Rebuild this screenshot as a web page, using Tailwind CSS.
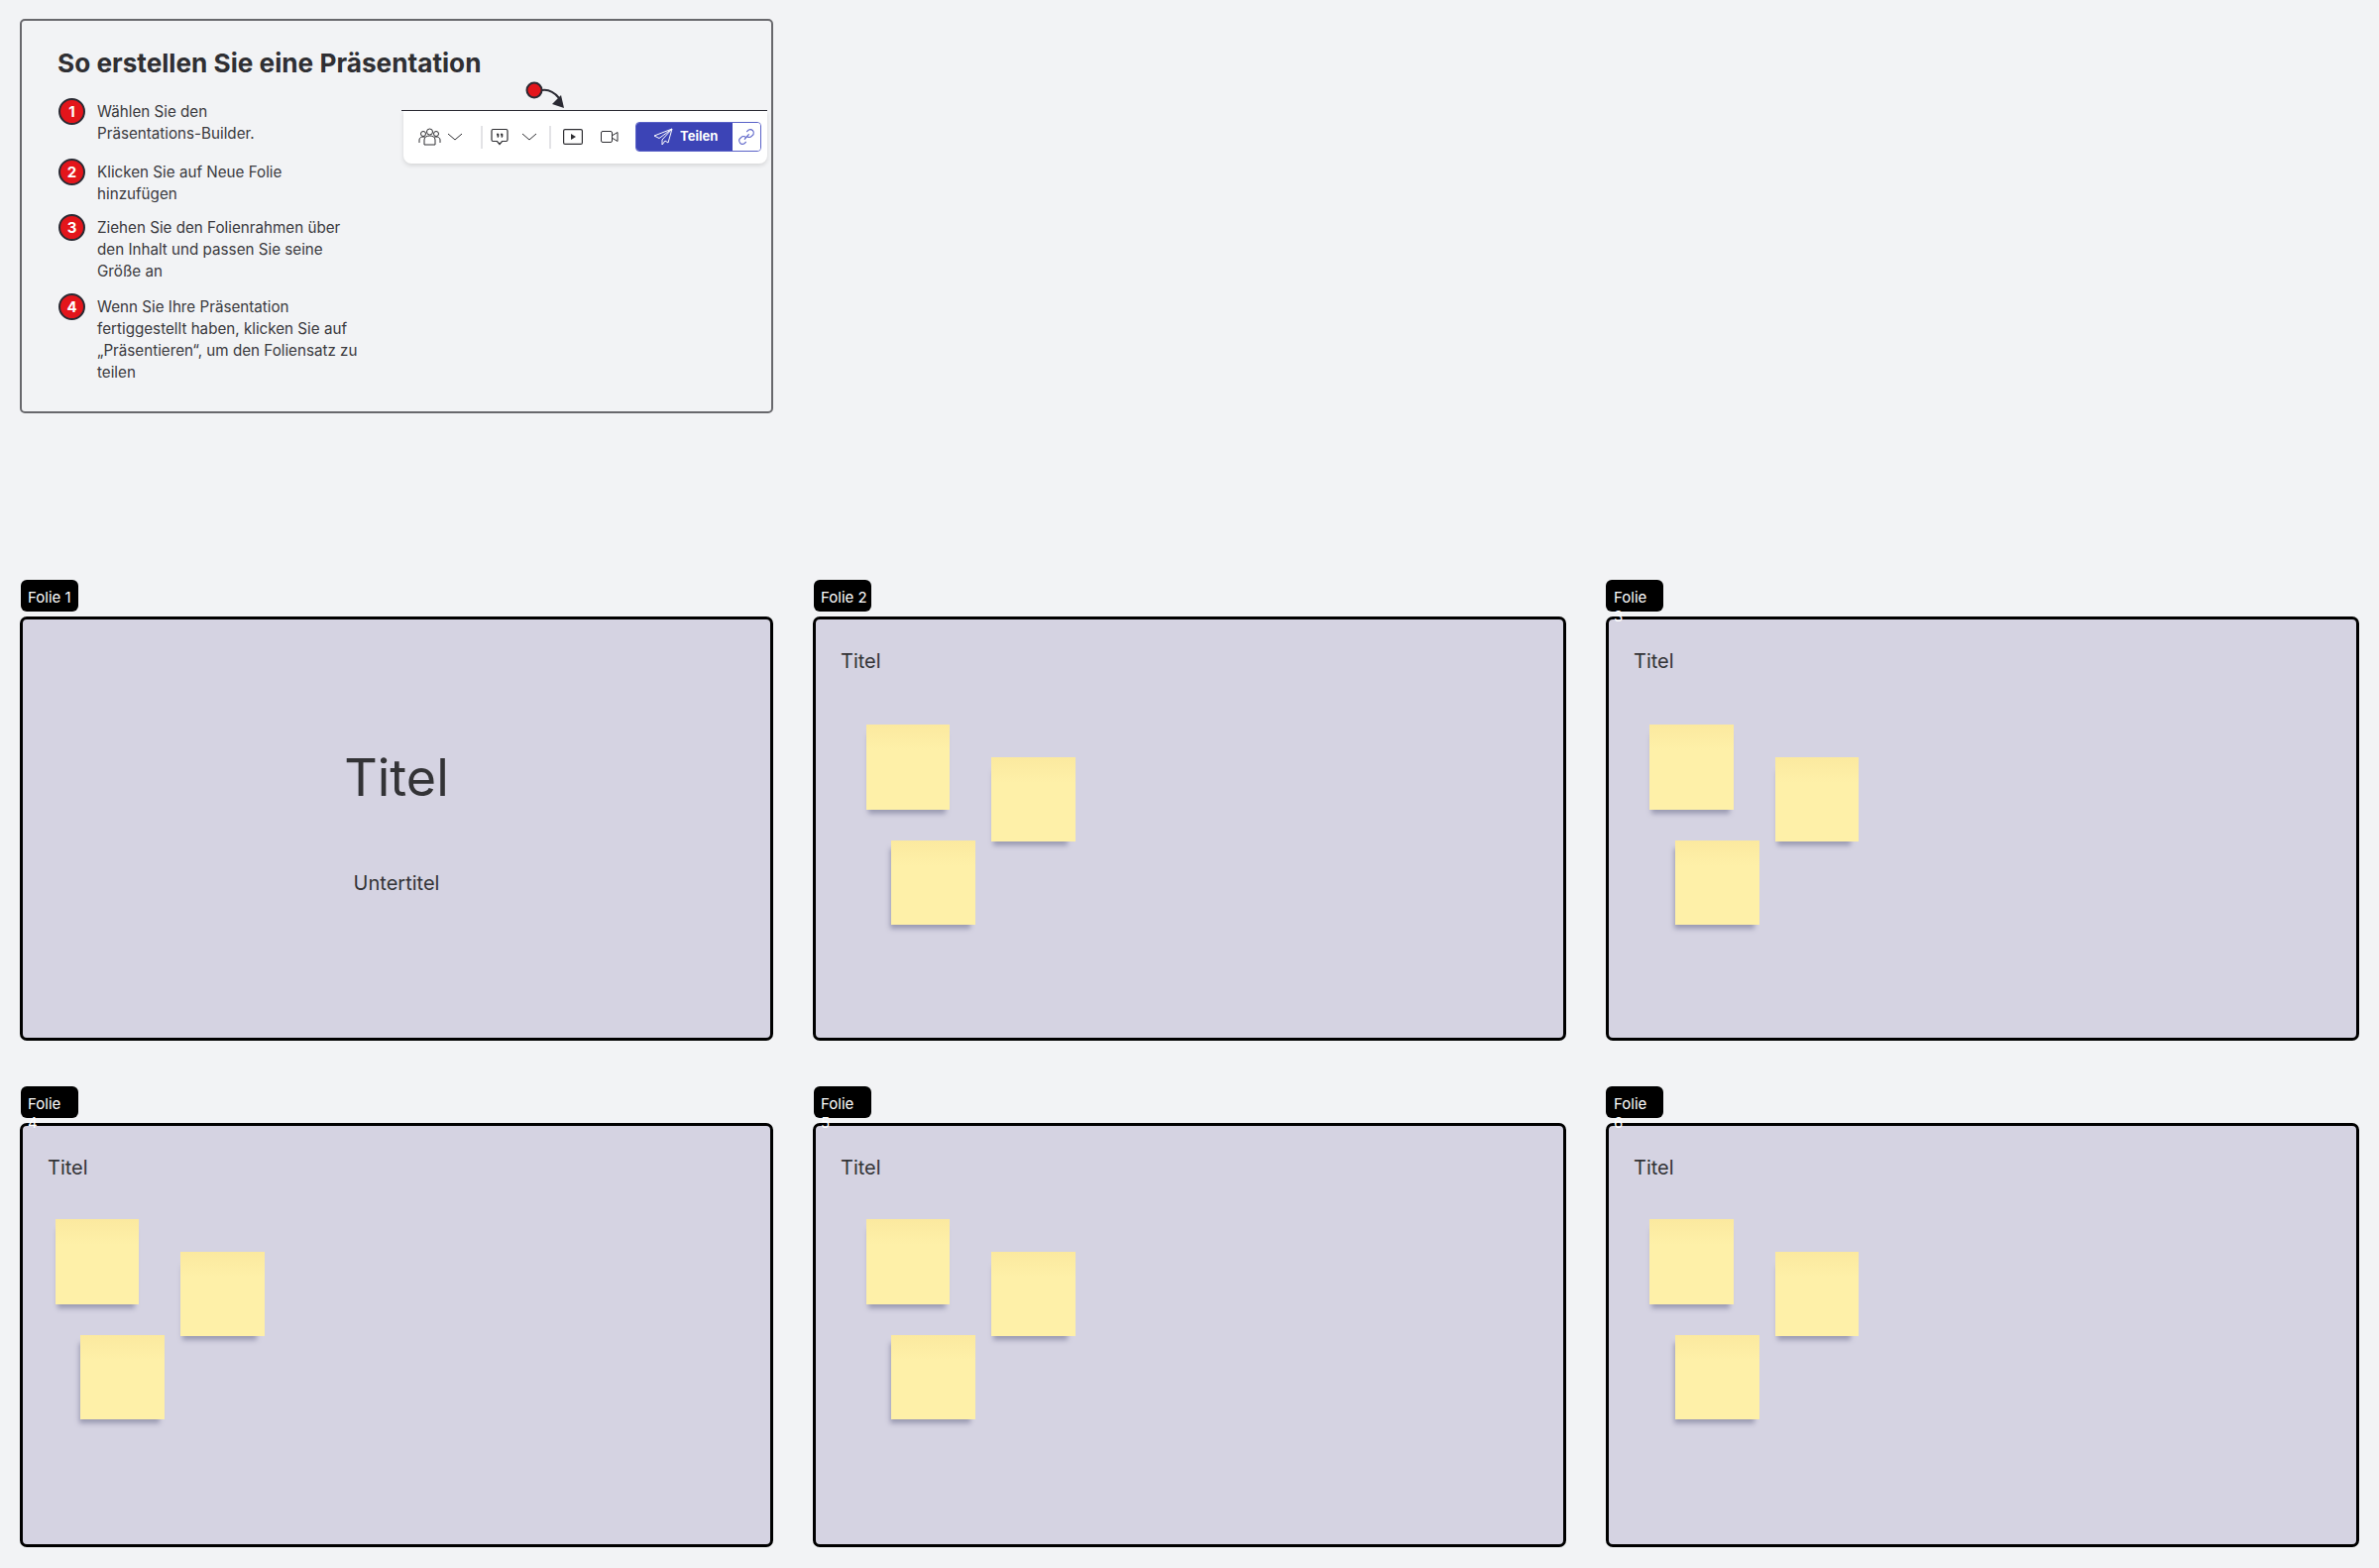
<!DOCTYPE html>
<html lang="de">
<head>
  <meta charset="UTF-8">
  <title>Präsentation</title>
  <script src="https://cdn.jsdelivr.net/npm/@tailwindcss/browser@4"></script>
</head>
<body class="bg-[#f2f3f5] font-[Inter,sans-serif] text-[#2f2f33] w-[2400px] h-[1582px] overflow-hidden">

  <!-- Anleitung -->
  <section class="relative ml-[20px] mt-[19px] w-[760px] h-[398px] border-2 border-[#68686c] rounded-[5px] pl-[37px] pt-[26px]">
    <h1 class="-ml-px text-[26.2px] leading-[34px] font-bold">So erstellen Sie eine Präsentation</h1>
    <ol class="mt-[18px] w-[340px] text-[15.2px] leading-[22px] text-[#3a3a3e]">
      <li class="flex gap-[12px] h-[61px]">
        <span class="shrink-0 flex items-center justify-center w-[27px] h-[27px] pt-px rounded-full bg-[#e3151b] border-2 border-[#2a2a33] text-white text-[15px] font-bold">1</span>
        <p class="pt-[3px] w-[260px]">Wählen Sie den<br>Präsentations-Builder.</p>
      </li>
      <li class="flex gap-[12px] h-[56px]">
        <span class="shrink-0 flex items-center justify-center w-[27px] h-[27px] pt-px rounded-full bg-[#e3151b] border-2 border-[#2a2a33] text-white text-[15px] font-bold">2</span>
        <p class="pt-[3px] w-[260px]">Klicken Sie auf Neue Folie<br>hinzufügen</p>
      </li>
      <li class="flex gap-[12px] h-[80px]">
        <span class="shrink-0 flex items-center justify-center w-[27px] h-[27px] pt-px rounded-full bg-[#e3151b] border-2 border-[#2a2a33] text-white text-[15px] font-bold">3</span>
        <p class="pt-[3px] w-[290px]">Ziehen Sie den Folienrahmen über<br>den Inhalt und passen Sie seine<br>Größe an</p>
      </li>
      <li class="flex gap-[12px]">
        <span class="shrink-0 flex items-center justify-center w-[27px] h-[27px] pt-px rounded-full bg-[#e3151b] border-2 border-[#2a2a33] text-white text-[15px] font-bold">4</span>
        <p class="pt-[3px] w-[300px]">Wenn Sie Ihre Präsentation<br>fertiggestellt haben, klicken Sie auf<br>„Präsentieren“, um den Foliensatz zu<br>teilen</p>
      </li>
    </ol>

    <!-- Pfeil zur Symbolleiste -->
    <svg class="absolute left-[508px] top-[60px]" width="50" height="32" viewBox="0 0 50 32" fill="none">
      <circle cx="9" cy="10" r="7.5" fill="#e3151b" stroke="#2a2a33" stroke-width="2"/>
      <path d="M17 10c7-1 12 2 17 8" stroke="#2a2a33" stroke-width="2"/>
      <path d="M39 28l-12-4 9-9z" fill="#2a2a33"/>
    </svg>

    <!-- Symbolleiste -->
    <div class="absolute left-[383px] top-[90px] w-[369px] h-[54px] border-t-[1.5px] border-[#2a2a33]">
      <div class="ml-[2px] h-[53px] bg-white rounded-b-[8px] shadow-[0_2px_4px_rgba(0,0,0,0.12)] flex items-center pl-[15px] pb-[1px] text-[#2f2f33]">
        <svg width="23" height="18" viewBox="0 0 23 18" fill="none" stroke="currentColor" stroke-width="1">
          <circle cx="5" cy="6" r="2.5"/><circle cx="18" cy="6" r="2.5"/><circle cx="11.5" cy="4" r="3"/>
          <path d="M1 15v-3c0-2 2-3 4-3s2 .5 2 .5M22 15v-3c0-2-2-3-4-3s-2 .5-2 .5M6 17v-5c0-3 3-4 5.500-4s5.500 1 5.500 4v5z"/>
        </svg>
        <svg class="ml-[6px]" width="16" height="8" viewBox="0 0 16 8" fill="none" stroke="currentColor" stroke-width="1"><path d="M1 1l7 6 7-6"/></svg>
        <span class="ml-[18px] w-[2px] h-[23px] bg-[#e3e3e6]"></span>
        <svg class="ml-[8px]" width="18" height="18" viewBox="0 0 18 18" fill="none" stroke="currentColor" stroke-width="1.200">
          <path d="M2.500 1.500h13a1.500 1.500 0 0 1 1.500 1.500v9a1.500 1.500 0 0 1-1.500 1.500H11.500L9 16.500 6.500 13.500h-4A1.500 1.500 0 0 1 1 12V3a1.500 1.500 0 0 1 1.500-1.500z"/>
          <path d="M6 6h2v2.500L7 10M10 6h2v2.500L11 10" fill="currentColor" stroke-width=".6"/>
        </svg>
        <svg class="ml-[13px]" width="16" height="8" viewBox="0 0 16 8" fill="none" stroke="currentColor" stroke-width="1"><path d="M1 1l7 6 7-6"/></svg>
        <span class="ml-[12px] w-[2px] h-[23px] bg-[#e3e3e6]"></span>
        <svg class="ml-[12px]" width="20" height="16" viewBox="0 0 20 16" fill="none" stroke="currentColor" stroke-width="1.200">
          <rect x=".6" y=".6" width="18.800" height="14.800" rx="1.500"/><path d="M8 5l5 3-5 3z" fill="currentColor" stroke="none"/>
        </svg>
        <svg class="ml-[18px]" width="18" height="12" viewBox="0 0 18 12" fill="none" stroke="currentColor" stroke-width="1">
          <rect x=".5" y=".5" width="11" height="11" rx="1.500"/><path d="M12 4.500l5-3v9l-5-3"/>
        </svg>
        <div class="ml-[17px] flex h-[30px] w-[127px] rounded-[4px] overflow-hidden border border-[#5a62c8]">
          <div class="w-[97px] bg-[#3c44b6] text-white flex items-center pl-[17px] gap-[7px] text-[13px] font-bold">
            <svg width="20" height="18" viewBox="0 0 20 18" fill="none" stroke="currentColor" stroke-width="1"><path d="M19 1L1 8l5 2.500L19 1l-10 11v5l3-4 3 2z"/></svg>
            <span>Teilen</span>
          </div>
          <div class="flex-1 flex items-center justify-center bg-white text-[#5a62c8]">
            <svg width="20" height="20" viewBox="0 0 17 17" fill="none" stroke="currentColor" stroke-width="1" stroke-linecap="round">
              <path d="M7 10.500l3.500-4M9 4l1.500-1.500a3 3 0 0 1 4 4L13 8a3 3 0 0 1-3.500.5M8 13l-1.500 1.500a3 3 0 0 1-4-4L4 9a3 3 0 0 1 3.500-.5"/>
            </svg>
          </div>
        </div>
      </div>
    </div>
  </section>

  <!-- Folien -->
  <main class="ml-[20px] mt-[168px] w-[2360px] grid grid-cols-[760px_760px_760px] gap-x-[40px] gap-y-[46px]">

    <article>
      <div class="relative z-10 ml-px w-[58px] h-[32px] bg-black rounded-[6px] px-[7px] pt-[8px] text-white text-[15px] leading-[19px] whitespace-nowrap">Folie 1</div>
      <div class="mt-[5px] h-[428px] border-[3px] border-black rounded-[7px] bg-[#d5d3e2] flex flex-col items-center">
        <h2 class="mt-[130px] text-[52px] leading-[60px] text-[#333336]">Titel</h2>
        <p class="mt-[62px] text-[20px] leading-[28px] text-[#333336]">Untertitel</p>
      </div>
    </article>

    <article>
      <div class="relative z-10 ml-px w-[58px] h-[32px] bg-black rounded-[6px] px-[7px] pt-[8px] text-white text-[15px] leading-[19px] whitespace-nowrap">Folie 2</div>
      <div class="relative mt-[5px] h-[428px] border-[3px] border-black rounded-[7px] bg-[#d5d3e2] pl-[25px] pt-[28px] text-[20px] leading-[28px] text-[#333336]">
        Titel
        <div class="absolute left-[51px] top-[106px] w-[84px] h-[86px] bg-gradient-to-b from-[#fbe99f] to-[#fef0a8] to-30% shadow-[-1px_7px_5px_-3px_#9a9ab2]"></div>
        <div class="absolute left-[177px] top-[139px] w-[85px] h-[85px] bg-gradient-to-b from-[#fbe99f] to-[#fef0a8] to-30% shadow-[-3px_9px_5px_-5px_#9a9ab2]"></div>
        <div class="absolute left-[76px] top-[223px] w-[85px] h-[85px] bg-gradient-to-b from-[#fbe99f] to-[#fef0a8] to-30% shadow-[-3px_6px_5px_-2px_#9a9ab2]"></div>
      </div>
    </article>

    <article>
      <div class="relative z-10 w-[58px] h-[32px] bg-black rounded-[6px] px-[8px] pt-[8px] text-white text-[15px] leading-[19px]">Folie<br>3</div>
      <div class="relative mt-[5px] h-[428px] border-[3px] border-black rounded-[7px] bg-[#d5d3e2] pl-[25px] pt-[28px] text-[20px] leading-[28px] text-[#333336]">
        Titel
        <div class="absolute left-[41px] top-[106px] w-[85px] h-[86px] bg-gradient-to-b from-[#fbe99f] to-[#fef0a8] to-30% shadow-[-1px_7px_5px_-3px_#9a9ab2]"></div>
        <div class="absolute left-[168px] top-[139px] w-[84px] h-[85px] bg-gradient-to-b from-[#fbe99f] to-[#fef0a8] to-30% shadow-[-3px_9px_5px_-5px_#9a9ab2]"></div>
        <div class="absolute left-[67px] top-[223px] w-[85px] h-[85px] bg-gradient-to-b from-[#fbe99f] to-[#fef0a8] to-30% shadow-[-3px_6px_5px_-2px_#9a9ab2]"></div>
      </div>
    </article>

    <article>
      <div class="relative z-10 ml-px w-[58px] h-[32px] bg-black rounded-[6px] px-[7px] pt-[8px] text-white text-[15px] leading-[19px]">Folie<br>4</div>
      <div class="relative mt-[5px] h-[428px] border-[3px] border-black rounded-[7px] bg-[#d5d3e2] pl-[25px] pt-[28px] text-[20px] leading-[28px] text-[#333336]">
        Titel
        <div class="absolute left-[33px] top-[94px] w-[84px] h-[86px] bg-gradient-to-b from-[#fbe99f] to-[#fef0a8] to-30% shadow-[-1px_7px_5px_-3px_#9a9ab2]"></div>
        <div class="absolute left-[159px] top-[127px] w-[85px] h-[85px] bg-gradient-to-b from-[#fbe99f] to-[#fef0a8] to-30% shadow-[-3px_9px_5px_-5px_#9a9ab2]"></div>
        <div class="absolute left-[58px] top-[211px] w-[85px] h-[85px] bg-gradient-to-b from-[#fbe99f] to-[#fef0a8] to-30% shadow-[-3px_6px_5px_-2px_#9a9ab2]"></div>
      </div>
    </article>

    <article>
      <div class="relative z-10 ml-px w-[58px] h-[32px] bg-black rounded-[6px] px-[7px] pt-[8px] text-white text-[15px] leading-[19px]">Folie<br>5</div>
      <div class="relative mt-[5px] h-[428px] border-[3px] border-black rounded-[7px] bg-[#d5d3e2] pl-[25px] pt-[28px] text-[20px] leading-[28px] text-[#333336]">
        Titel
        <div class="absolute left-[51px] top-[94px] w-[84px] h-[86px] bg-gradient-to-b from-[#fbe99f] to-[#fef0a8] to-30% shadow-[-1px_7px_5px_-3px_#9a9ab2]"></div>
        <div class="absolute left-[177px] top-[127px] w-[85px] h-[85px] bg-gradient-to-b from-[#fbe99f] to-[#fef0a8] to-30% shadow-[-3px_9px_5px_-5px_#9a9ab2]"></div>
        <div class="absolute left-[76px] top-[211px] w-[85px] h-[85px] bg-gradient-to-b from-[#fbe99f] to-[#fef0a8] to-30% shadow-[-3px_6px_5px_-2px_#9a9ab2]"></div>
      </div>
    </article>

    <article>
      <div class="relative z-10 w-[58px] h-[32px] bg-black rounded-[6px] px-[8px] pt-[8px] text-white text-[15px] leading-[19px]">Folie<br>6</div>
      <div class="relative mt-[5px] h-[428px] border-[3px] border-black rounded-[7px] bg-[#d5d3e2] pl-[25px] pt-[28px] text-[20px] leading-[28px] text-[#333336]">
        Titel
        <div class="absolute left-[41px] top-[94px] w-[85px] h-[86px] bg-gradient-to-b from-[#fbe99f] to-[#fef0a8] to-30% shadow-[-1px_7px_5px_-3px_#9a9ab2]"></div>
        <div class="absolute left-[168px] top-[127px] w-[84px] h-[85px] bg-gradient-to-b from-[#fbe99f] to-[#fef0a8] to-30% shadow-[-3px_9px_5px_-5px_#9a9ab2]"></div>
        <div class="absolute left-[67px] top-[211px] w-[85px] h-[85px] bg-gradient-to-b from-[#fbe99f] to-[#fef0a8] to-30% shadow-[-3px_6px_5px_-2px_#9a9ab2]"></div>
      </div>
    </article>
  </main>
</body>
</html>
